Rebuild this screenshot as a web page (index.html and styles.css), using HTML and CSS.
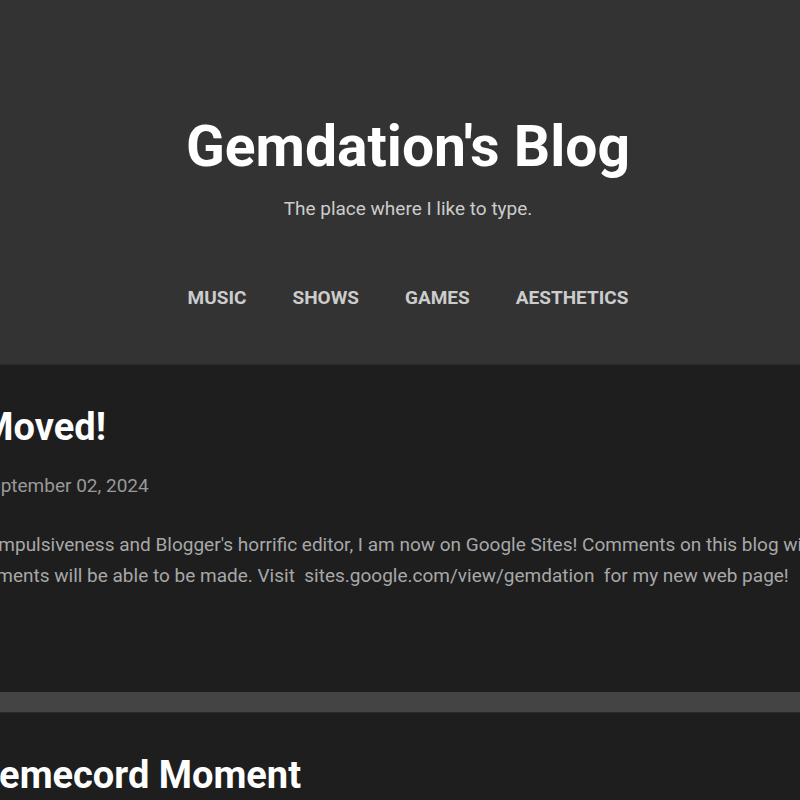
FILE: index.html
```html
<!DOCTYPE html>
<html lang="en">
<head>
<meta charset="utf-8">
<title>Gemdation's Blog</title>
<link rel="stylesheet" href="styles.css">
</head>
<body>
<div class="site">
  <header class="masthead">
    <h1 class="blog-title">Gemdation's Blog</h1>
    <p class="blog-desc">The place where I like to type.</p>
    <nav class="nav">
      <a class="nav-link" href="#">Music</a>
      <a class="nav-link" href="#">Shows</a>
      <a class="nav-link" href="#">Games</a>
      <a class="nav-link" href="#">Aesthetics</a>
    </nav>
  </header>
  <main class="posts">
    <article class="post">
      <h2 class="post-title">Site Moved!</h2>
      <div class="post-date">Monday, September 02, 2024</div>
      <p class="post-body">Due to my impulsiveness and Blogger's horrific editor, I am now on Google Sites! Comments on this blog will be<br>future comments will be able to be made. Visit &nbsp;sites.google.com/view/gemdation &nbsp;for my new web page!</p>
    </article>
    <article class="post">
      <h2 class="post-title">My Memecord Moment</h2>
    </article>
  </main>
</div>
</body>
</html>
```

FILE: styles.css
```css
html, body {
  margin: 0;
  padding: 0;
}
body {
  background: #1e1e1e;
  font-family: Roboto, "Liberation Sans", sans-serif;
  display: flex;
  justify-content: center;
  overflow: hidden;
  height: 800px;
}
.site {
  flex: none;
  width: 992px;
  background: #444444;
  display: flex;
  flex-direction: column;
}
.masthead {
  background: #333333;
  padding: 113px 0 55px 16px;
  display: flex;
  flex-direction: column;
  align-items: center;
}
.blog-title {
  margin: 0;
  font-size: 57px;
  font-weight: 700;
  color: #ffffff;
  line-height: normal;
}
.blog-desc {
  margin: 17px 0 0;
  font-size: 19px;
  color: #cccccc;
  line-height: normal;
}
.nav {
  margin-top: 66px;
  display: flex;
  gap: 46px;
}
.nav-link {
  font-size: 19px;
  font-weight: 700;
  text-transform: uppercase;
  text-decoration: none;
  color: #cccccc;
  line-height: normal;
}
.posts {
  display: flex;
  flex-direction: column;
  gap: 20px;
}
.post {
  background: #1e1e1e;
  border-top: 1px solid #2a2a2a;
  padding: 40px 0 101px 0;
}
.post-title {
  margin: 0;
  font-size: 38px;
  font-weight: 700;
  color: #ffffff;
  line-height: normal;
}
.post-date {
  margin-top: 25px;
  font-size: 19px;
  color: #999999;
  line-height: normal;
}
.post-body {
  margin: 32px 0 0;
  font-size: 19px;
  line-height: 31px;
  color: #a8a8a8;
}
```
